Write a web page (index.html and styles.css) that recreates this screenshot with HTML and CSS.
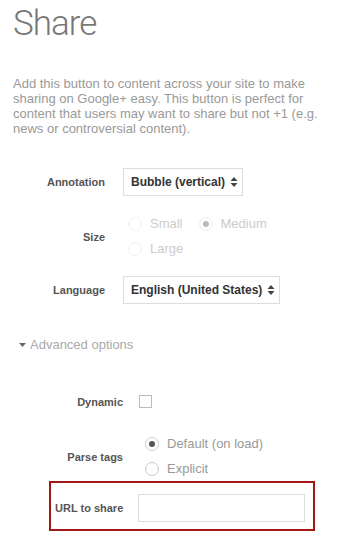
FILE: index.html
```html
<!DOCTYPE html>
<html lang="en">
<head>
  <meta charset="UTF-8">
  <title>Share</title>
  <link rel="stylesheet" href="styles.css">
</head>
<body>
  <div class="page">
    <h1>Share</h1>
    <p class="intro">Add this button to content across your site to make sharing on Google+ easy. This button is perfect for content that users may want to share but not +1 (e.g. news or controversial content).</p>

    <div class="form">
      <div class="row row-annotation">
        <div class="label">Annotation</div>
        <div class="select">
          <span>Bubble (vertical)</span>
          <svg class="arrows" width="8" height="12" viewBox="0 0 8 12"><path d="M4 1 L7.5 5 H0.5 Z M4 11 L7.5 7 H0.5 Z" fill="#444"/></svg>
        </div>
      </div>

      <div class="row row-size">
        <div class="label">Size</div>
        <div class="options disabled">
          <div class="opt-line">
            <label class="radio"><span class="dot"></span>Small</label>
            <label class="radio checked"><span class="dot"></span>Medium</label>
          </div>
          <div class="opt-line">
            <label class="radio"><span class="dot"></span>Large</label>
          </div>
        </div>
      </div>

      <div class="row row-language">
        <div class="label">Language</div>
        <div class="select">
          <span>English (United States)</span>
          <svg class="arrows" width="8" height="12" viewBox="0 0 8 12"><path d="M4 1 L7.5 5 H0.5 Z M4 11 L7.5 7 H0.5 Z" fill="#444"/></svg>
        </div>
      </div>
    </div>

    <div class="advanced-toggle">
      <svg width="7" height="4" viewBox="0 0 7 4"><path d="M0 0 H7 L3.5 4 Z" fill="#666"/></svg>
      Advanced options
    </div>

    <div class="form advanced">
      <div class="row row-dynamic">
        <div class="label">Dynamic</div>
        <span class="checkbox"></span>
      </div>

      <div class="row row-parse">
        <div class="label">Parse tags</div>
        <div class="options">
          <div class="opt-line">
            <label class="radio checked"><span class="dot"></span>Default (on load)</label>
          </div>
          <div class="opt-line">
            <label class="radio"><span class="dot"></span>Explicit</label>
          </div>
        </div>
      </div>

      <div class="row row-url">
        <div class="label">URL to share</div>
        <input type="text" class="text-input">
      </div>
    </div>
  </div>
</body>
</html>
```

FILE: styles.css
```css
body {
  margin: 0;
  font-family: "Liberation Sans", Arial, sans-serif;
  background: #fff;
}
.page {
  padding: 0 13px;
}
h1 {
  margin: 0;
  padding-top: 2px;
  font-family: Roboto, "Liberation Sans", sans-serif;
  font-weight: 300;
  font-size: 35px;
  line-height: 44px;
  letter-spacing: -1px;
  color: #777;
}
.intro {
  margin: 30px 0 0;
  width: 312px;
  font-size: 13px;
  line-height: 15px;
  color: #999;
}
.form {
  margin-top: 32px;
}
.row {
  display: flex;
  align-items: center;
}
.label {
  width: 92px;
  margin-right: 18px;
  text-align: right;
  white-space: nowrap;
  font-size: 11px;
  font-weight: bold;
  color: #555;
}
.select {
  display: flex;
  align-items: center;
  height: 26px;
  padding: 0 4px 0 7px;
  border: 1px solid #ddd;
  font-size: 12px;
  font-weight: bold;
  color: #333;
}
.select .arrows {
  margin-left: 5px;
}
.row-size {
  margin-top: 21px;
}
.options {
  display: flex;
  flex-direction: column;
  gap: 11px;
  padding-left: 5px;
}
.opt-line {
  display: flex;
  gap: 16px;
}
.radio {
  display: flex;
  align-items: center;
  font-size: 13px;
  line-height: 14px;
  color: #999;
}
.radio .dot {
  position: relative;
  width: 12px;
  height: 12px;
  margin-right: 8px;
  border: 1px solid #ccc;
  border-radius: 50%;
}
.radio.checked .dot::after {
  content: "";
  position: absolute;
  left: 3px;
  top: 3px;
  width: 6px;
  height: 6px;
  border-radius: 50%;
  background: #555;
}
.disabled .radio {
  color: #ccc;
}
.disabled .radio .dot {
  border-color: #f0f0f0;
}
.disabled .radio.checked .dot::after {
  background: #bbb;
}
.row-language {
  margin-top: 20px;
}
.advanced-toggle {
  display: flex;
  align-items: center;
  gap: 4px;
  margin-top: 33px;
  padding-left: 6px;
  font-size: 13px;
  color: #aaa;
}
.advanced {
  margin-top: 43px;
  padding-left: 18px;
}
.advanced .label {
  margin-right: 15px;
}
.checkbox {
  display: block;
  width: 11px;
  height: 11px;
  margin-left: 1px;
  border: 1px solid #bbb;
}
.row-parse {
  margin-top: 29px;
}
.advanced .options {
  padding-left: 7px;
}
.row-url {
  margin: 5px 0 0 18px;
  padding: 11px 6px 7px 4px;
  width: 252px;
  border: 2px solid #a31616;
}
.row-url .label {
  width: 68px;
}
.text-input {
  width: 165px;
  height: 26px;
  padding: 0;
  border: 1px solid #ddd;
  box-sizing: content-box;
}
```
